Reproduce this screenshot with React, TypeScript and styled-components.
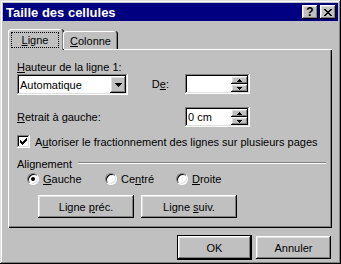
import React from 'react';
import styled, { createGlobalStyle, css } from 'styled-components';

const GlobalStyle = createGlobalStyle`
  html, body {
    margin: 0;
    padding: 0;
    background: #c0c0c0;
  }
  body {
    font-family: 'Liberation Sans', Arial, sans-serif;
    font-size: 11px;
    color: #000;
  }
`;

const raised = css`
  box-shadow: inset -1px -1px #000, inset 1px 1px #fff, inset -2px -2px #808080,
    inset 2px 2px #dfdfdf;
`;

const sunken = css`
  box-shadow: inset -1px -1px #fff, inset 1px 1px #808080, inset -2px -2px #dfdfdf,
    inset 2px 2px #000;
`;

const Window = styled.div`
  width: 341px;
  height: 264px;
  box-sizing: border-box;
  padding: 3px;
  background: #c0c0c0;
  box-shadow: inset -1px -1px #000, inset 1px 1px #dfdfdf, inset -2px -2px #808080,
    inset 2px 2px #fff;
  display: flex;
  flex-direction: column;
`;

const TitleBar = styled.div`
  height: 18px;
  background: #000080;
  display: flex;
  align-items: center;
  padding: 0 2px 0 3px;
`;

const Title = styled.span`
  flex: 1;
  color: #fff;
  font-weight: bold;
  font-size: 13px;
`;

const TitleButtons = styled.div`
  display: flex;
  gap: 2px;
`;

const TitleButton = styled.div`
  width: 16px;
  height: 14px;
  background: #c0c0c0;
  ${raised};
  display: flex;
  align-items: center;
  justify-content: center;
  font-weight: bold;
  font-size: 12px;
  line-height: 14px;
`;

const Body = styled.div`
  padding: 8px 6px 0 5px;
  display: flex;
  flex-direction: column;
`;

const TabRow = styled.div`
  display: flex;
  align-items: flex-end;
  height: 21px;
  position: relative;
  z-index: 1;
  margin-bottom: -1px;
`;

const Tab = styled.div<{ $active?: boolean }>`
  box-sizing: border-box;
  height: ${(p) => (p.$active ? 21 : 18)}px;
  width: ${(p) => (p.$active ? 56 : 55)}px;
  margin-bottom: ${(p) => (p.$active ? 0 : 1)}px;
  margin-left: ${(p) => (p.$active ? 0 : -1)}px;
  padding: ${(p) => (p.$active ? '3px 5px 0 3px' : '2px 0 0')};
  background: #c0c0c0;
  border-top-left-radius: 3px;
  border-top-right-radius: 3px;
  box-shadow: inset -1px 0 #000, inset 1px 1px #fff, inset -2px 0 #808080;
  display: flex;
  justify-content: center;
`;

const FocusLabel = styled.span<{ $focus?: boolean }>`
  display: block;
  box-sizing: border-box;
  width: ${(p) => (p.$focus ? '48px' : 'auto')};
  height: 16px;
  line-height: 14px;
  text-align: center;
  border: 1px ${(p) => (p.$focus ? 'dotted #000' : 'solid transparent')};
`;

const Panel = styled.div`
  box-sizing: border-box;
  height: 179px;
  padding: 12px 6px 0 9px;
  background: #c0c0c0;
  box-shadow: inset 1px 1px #fff, inset -1px -1px #000, inset -2px -2px #808080;
  display: flex;
  flex-direction: column;
`;

const Key = styled.span`
  text-decoration: underline;
`;

const FieldGrid = styled.div`
  display: grid;
  grid-template-columns: 111px 57px 65px;
  grid-template-rows: 13px 20px 13px 20px;
  align-items: center;
`;

const Label = styled.span<{ $span?: number; $right?: boolean }>`
  grid-column: span ${(p) => p.$span || 1};
  justify-self: ${(p) => (p.$right ? 'end' : 'start')};
  margin-right: ${(p) => (p.$right ? 16 : 0)}px;
  white-space: nowrap;
  line-height: 13px;
`;

const Field = styled.div<{ $w: number; $h?: number }>`
  box-sizing: border-box;
  width: ${(p) => p.$w}px;
  height: ${(p) => p.$h || 20}px;
  align-self: start;
  background: #fff;
  ${sunken};
  display: flex;
  align-items: center;
  padding: 2px 2px 2px 3px;
`;

const FieldText = styled.span`
  flex: 1;
  line-height: 14px;
`;

const DropButton = styled.div`
  width: 16px;
  height: 17px;
  background: #c0c0c0;
  ${raised};
  display: flex;
  align-items: center;
  justify-content: center;
`;

const SpinButtons = styled.div`
  display: flex;
  flex-direction: column;
  align-self: stretch;
`;

const SpinButton = styled.div`
  width: 17px;
  flex: 1;
  background: #c0c0c0;
  ${raised};
  display: flex;
  align-items: center;
  justify-content: center;
`;

const Spacer = styled.div`
  grid-column: span 3;
  height: 13px;
`;

const CheckRow = styled.label`
  display: flex;
  align-items: center;
  gap: 5px;
  height: 13px;
  margin-top: 8px;
`;

const CheckBox = styled.span`
  box-sizing: border-box;
  width: 13px;
  height: 13px;
  background: #fff;
  ${sunken};
  display: flex;
  align-items: center;
  justify-content: center;
`;

const GroupHead = styled.div`
  display: flex;
  align-items: center;
  gap: 6px;
  height: 13px;
  margin-top: 9px;
`;

const Rule = styled.div`
  flex: 1;
  border-top: 1px solid #808080;
  border-bottom: 1px solid #fff;
  margin-bottom: 2px;
`;

const RadioRow = styled.div`
  display: flex;
  height: 13px;
  margin: 2px 0 0 10px;
`;

const RadioItem = styled.label<{ $w: number }>`
  display: flex;
  align-items: center;
  gap: 4px;
  width: ${(p) => p.$w}px;
`;

const RadioDot = styled.span<{ $on?: boolean }>`
  box-sizing: border-box;
  width: 12px;
  height: 12px;
  border-radius: 50%;
  background: #fff;
  border: 1px solid;
  border-color: #808080 #fff #fff #808080;
  box-shadow: inset 1px 1px #000, inset -1px -1px #dfdfdf;
  display: flex;
  align-items: center;
  justify-content: center;
  &::after {
    content: '';
    display: ${(p) => (p.$on ? 'block' : 'none')};
    width: 4px;
    height: 4px;
    border-radius: 50%;
    background: #000;
  }
`;

const ButtonRow = styled.div<{ $end?: boolean }>`
  display: flex;
  align-items: center;
  gap: ${(p) => (p.$end ? 4 : 7)}px;
  justify-content: ${(p) => (p.$end ? 'flex-end' : 'flex-start')};
  margin: ${(p) => (p.$end ? '7px 1px 0 0' : '10px 0 0 21px')};
`;

const Button = styled.div<{ $w: number; $default?: boolean }>`
  box-sizing: border-box;
  width: ${(p) => p.$w}px;
  height: ${(p) => (p.$default ? 25 : 23)}px;
  background: #c0c0c0;
  display: flex;
  align-items: center;
  justify-content: center;
  ${raised};
  ${(p) =>
    p.$default &&
    css`
      border: 1px solid #000;
    `}
`;

const Arrow = ({ up }: { up?: boolean }) => (
  <svg width="7" height="4" viewBox="0 0 7 4" shapeRendering="crispEdges">
    <path d={up ? 'M3 0h1v1h1v1h1v1h1v1H0V3h1V2h1V1h1z' : 'M0 0h7v1H6v1H5v1H4v1H3V3H2V2H1V1H0z'} fill="#000" />
  </svg>
);

const SmallArrow = ({ up }: { up?: boolean }) => (
  <svg width="5" height="3" viewBox="0 0 5 3" shapeRendering="crispEdges">
    <path d={up ? 'M2 0h1v1h1v1h1v1H0V2h1V1h1z' : 'M0 0h5v1H4v1H3v1H2V2H1V1H0z'} fill="#000" />
  </svg>
);

const CloseGlyph = () => (
  <svg width="8" height="7" viewBox="0 0 8 7" shapeRendering="crispEdges">
    <path
      d="M0 0h2v1h1v1h2V1h1V0h2v1H7v1H6v1H5v1h1v1h1v1h1v1H6V6H5V5H3v1H2v1H0V6h1V5h1V4h1V3H2V2H1V1H0z"
      fill="#000"
    />
  </svg>
);

const Tick = () => (
  <svg width="7" height="7" viewBox="0 0 7 7" shapeRendering="crispEdges">
    <path d="M6 0h1v3H6v1H5v1H4v1H3v1H2V6H1V5H0V2h1v1h1v1h1V3h1V2h1V1h1z" fill="#000" />
  </svg>
);

const Spin = ({ value }: { value?: string }) => (
  <Field $w={65}>
    <FieldText>{value}</FieldText>
    <SpinButtons>
      <SpinButton>
        <SmallArrow up />
      </SpinButton>
      <SpinButton>
        <SmallArrow />
      </SpinButton>
    </SpinButtons>
  </Field>
);

export default function App() {
  return (
    <>
      <GlobalStyle />
      <Window>
        <TitleBar>
          <Title>Taille des cellules</Title>
          <TitleButtons>
            <TitleButton>?</TitleButton>
            <TitleButton>
              <CloseGlyph />
            </TitleButton>
          </TitleButtons>
        </TitleBar>
        <Body>
          <TabRow>
            <Tab $active>
              <FocusLabel $focus>
                <Key>L</Key>igne
              </FocusLabel>
            </Tab>
            <Tab>
              <FocusLabel>
                <Key>C</Key>olonne
              </FocusLabel>
            </Tab>
          </TabRow>
          <Panel>
            <FieldGrid>
              <Label $span={3}>
                <Key>H</Key>auteur de la ligne 1:
              </Label>
              <Field $w={111} $h={21}>
                <FieldText>Automatique</FieldText>
                <DropButton>
                  <Arrow />
                </DropButton>
              </Field>
              <Label $right>
                D<Key>e</Key>:
              </Label>
              <Spin />
              <Spacer />
              <Label $span={2}>
                <Key>R</Key>etrait à gauche:
              </Label>
              <Spin value="0 cm" />
            </FieldGrid>
            <CheckRow>
              <CheckBox>
                <Tick />
              </CheckBox>
              <span>
                A<Key>u</Key>toriser le fractionnement des lignes sur plusieurs pages
              </span>
            </CheckRow>
            <GroupHead>
              <span>Alignement</span>
              <Rule />
            </GroupHead>
            <RadioRow>
              <RadioItem $w={78}>
                <RadioDot $on />
                <span>
                  <Key>G</Key>auche
                </span>
              </RadioItem>
              <RadioItem $w={71}>
                <RadioDot />
                <span>
                  Ce<Key>n</Key>tré
                </span>
              </RadioItem>
              <RadioItem $w={70}>
                <RadioDot />
                <span>
                  <Key>D</Key>roite
                </span>
              </RadioItem>
            </RadioRow>
            <ButtonRow>
              <Button $w={96}>
                <span>
                  Ligne <Key>p</Key>réc.
                </span>
              </Button>
              <Button $w={96}>
                <span>
                  Ligne <Key>s</Key>uiv.
                </span>
              </Button>
            </ButtonRow>
          </Panel>
          <ButtonRow $end>
            <Button $w={75} $default>
              OK
            </Button>
            <Button $w={75}>Annuler</Button>
          </ButtonRow>
        </Body>
      </Window>
    </>
  );
}
